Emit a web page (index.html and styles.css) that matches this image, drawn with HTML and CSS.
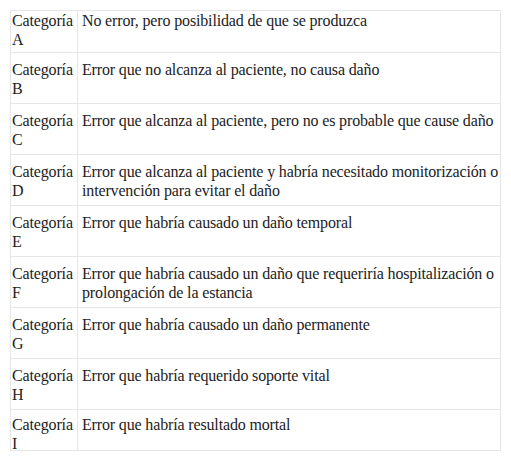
FILE: index.html
```html
<!DOCTYPE html>
<html lang="es">
<head>
<meta charset="utf-8">
<link rel="stylesheet" href="styles.css">
</head>
<body>
<div class="table">
  <div class="cell cat first">Categoría A</div>
  <div class="cell desc first">No error, pero posibilidad de que se produzca</div>
  <div class="cell cat">Categoría B</div>
  <div class="cell desc">Error que no alcanza al paciente, no causa daño</div>
  <div class="cell cat">Categoría C</div>
  <div class="cell desc">Error que alcanza al paciente, pero no es probable que cause daño</div>
  <div class="cell cat">Categoría D</div>
  <div class="cell desc">Error que alcanza al paciente y habría necesitado monitorización o intervención para evitar el daño</div>
  <div class="cell cat">Categoría E</div>
  <div class="cell desc">Error que habría causado un daño temporal</div>
  <div class="cell cat">Categoría F</div>
  <div class="cell desc">Error que habría causado un daño que requeriría hospitalización o prolongación de la estancia</div>
  <div class="cell cat">Categoría G</div>
  <div class="cell desc">Error que habría causado un daño permanente</div>
  <div class="cell cat">Categoría H</div>
  <div class="cell desc">Error que habría requerido soporte vital</div>
  <div class="cell cat last">Categoría I</div>
  <div class="cell desc last">Error que habría resultado mortal</div>
</div>
</body>
</html>
```

FILE: styles.css
```css
html, body {
  margin: 0;
  padding: 0;
  background: #ffffff;
}
body {
  padding: 10px 0 0 10px;
  font-family: "Liberation Serif", serif;
  font-size: 16px;
  color: #222222;
}
.table {
  display: grid;
  grid-template-columns: 67px 423px;
  width: 490px;
  border-top: 1px solid #e6e6e6;
  border-left: 1px solid #e6e6e6;
  font-family: "Liberation Serif", serif;
  font-size: 16px;
  letter-spacing: -0.15px;
}
.cell {
  box-sizing: border-box;
  height: 51px;
  padding-top: 7px;
  border-right: 1px solid #e6e6e6;
  border-bottom: 1px solid #e6e6e6;
  overflow: hidden;
  line-height: 19px;
}
.cat {
  padding-left: 1px;
}
.desc {
  padding-left: 4px;
}
.cell.first {
  height: 42px;
  padding-top: 0;
}
.cell.last {
  height: 41px;
  padding-top: 5px;
}
```
